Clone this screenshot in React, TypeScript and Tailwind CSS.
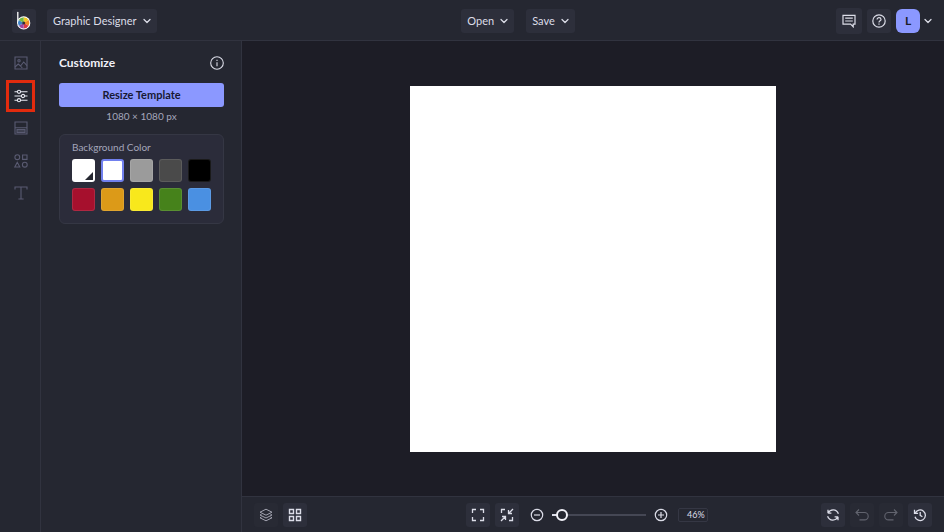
import React, { useState } from 'react';
import { ChevronDown } from 'lucide-react';

type IconProps = { size?: number; width?: number; className?: string; children: React.ReactNode };

const Icon: React.FC<IconProps> = ({ size = 14, width = 1.2, className = '', children }) => (
  <svg
    width={size}
    height={size}
    viewBox="0 0 14 14"
    fill="none"
    stroke="currentColor"
    strokeWidth={width}
    className={`shrink-0 ${className}`}
    aria-hidden="true"
  >
    {children}
  </svg>
);

const Logo = () => (
  <svg width="24" height="24" viewBox="0 0 24 24" aria-hidden="true">
    <path d="M5.8 3.4v10.6" stroke="#fff" strokeWidth="1.3" fill="none" strokeLinecap="round" />
    <circle cx="11.7" cy="13.9" r="6.6" fill="#fff" />
    <g transform="translate(11.7 13.9)">
      <path d="M0 0L0 -5.7A5.7 5.7 0 0 1 4.9 -2.85Z" fill="#f3c623" />
      <path d="M0 0L4.9 -2.85A5.7 5.7 0 0 1 4.9 2.85Z" fill="#f08a24" />
      <path d="M0 0L4.9 2.85A5.7 5.7 0 0 1 0 5.7Z" fill="#dd3a45" />
      <path d="M0 0L0 5.7A5.7 5.7 0 0 1 -4.9 2.85Z" fill="#9b49a4" />
      <path d="M0 0L-4.9 2.85A5.7 5.7 0 0 1 -4.9 -2.85Z" fill="#3f83c8" />
      <path d="M0 0L-4.9 -2.85A5.7 5.7 0 0 1 0 -5.7Z" fill="#72b845" />
      <circle r="1.5" fill="#30303a" />
    </g>
  </svg>
);

const tools = [
  {
    id: 'image',
    label: 'Image Manager',
    icon: (
      <>
        <path d="M1 1h12v12H1z" />
        <circle cx="5" cy="4.8" r="1.2" />
        <path d="M1 11l3.2-3 2.3 2 3.2-4 3.3 3.6M6.5 10l1.8 2" />
      </>
    )
  },
  {
    id: 'customize',
    label: 'Customize',
    icon: (
      <>
        <path d="M.5 2.8h2.8M6.7 2.8h6.8M.5 7h6.8M10.7 7h2.8M.5 11.2h2.8M6.7 11.2h6.8" />
        <circle cx="5" cy="2.8" r="1.6" />
        <circle cx="9" cy="7" r="1.6" />
        <circle cx="5" cy="11.2" r="1.6" />
      </>
    )
  },
  {
    id: 'templates',
    label: 'Templates',
    icon: (
      <>
        <path d="M1 1h12v12H1zM1 6.8h12" />
        <path d="M3 8.5h8v3H3z" fill="currentColor" fillOpacity=".5" />
      </>
    )
  },
  {
    id: 'graphics',
    label: 'Graphics',
    icon: (
      <>
        <circle cx="3.3" cy="3.2" r="2.4" />
        <path d="M8.6 1h4.4v4.4H8.6zM3.3 8.3L.8 13h5z" />
        <circle cx="10.8" cy="10.7" r="2.4" />
      </>
    )
  },
  {
    id: 'text',
    label: 'Text',
    icon: <path d="M1 3.6V1h12v2.6M7 1v12M4.4 13h5.2" />
  }
];

const colors = [
  { name: 'Transparent white', value: '#ffffff' },
  { name: 'White', value: '#ffffff' },
  { name: 'Gray', value: '#9b9b9b' },
  { name: 'Dark gray', value: '#4a4a4a' },
  { name: 'Black', value: '#000000' },
  { name: 'Red', value: '#a6102d' },
  { name: 'Orange', value: '#dc9a18' },
  { name: 'Yellow', value: '#f8e81c' },
  { name: 'Green', value: '#46821b' },
  { name: 'Blue', value: '#4a90e2' }
];

const MenuButton: React.FC<{ label: string }> = ({ label }) => (
  <button type="button" className="flex h-6 items-center gap-1 whitespace-nowrap rounded-[3px] bg-[#2d2f3b] pr-1 pl-1.5 text-[#dcdde8]">
    {label}
    <ChevronDown size={12} strokeWidth={2.5} />
  </button>
);

const ToolButton: React.FC<{ label: string; dim?: boolean; children: React.ReactNode }> = ({ label, dim, children }) => (
  <button
    type="button"
    aria-label={label}
    className={`flex size-6 shrink-0 items-center justify-center rounded-[3px] ${
      dim ? 'bg-[#282a34] text-[#62646f]' : 'bg-[#2d2f3b] text-[#dcdde8]'
    }`}
  >
    {children}
  </button>
);

const Header = () => (
  <header className="flex h-[41px] shrink-0 items-center border-b border-[#31333f] bg-[#252731] pt-0.5 pr-2.5 pl-3">
    <div className="flex gap-[11px]">
      <a href="#home" aria-label="Home" className="block size-6 rounded-[3px] bg-[#2d2f3b]">
        <Logo />
      </a>
      <MenuButton label="Graphic Designer" />
    </div>
    <div className="flex-[7]" />
    <div className="flex gap-3">
      <MenuButton label="Open" />
      <MenuButton label="Save" />
    </div>
    <div className="flex-[6]" />
    <div className="flex items-center gap-[5px] text-[#dcdde8]">
      <button type="button" aria-label="Messages" className="flex size-[26px] items-center justify-center rounded-[3px] bg-[#2d2f3b]">
        <Icon>
          <path d="M1 1.3h12v8.8h-1.8v2.7L8.6 10.1H1zM3.2 4.2h7.6M3.2 7h7.6" />
        </Icon>
      </button>
      <ToolButton label="Help">
        <Icon>
          <circle cx="7" cy="7" r="6.2" />
          <path d="M5.1 5.6c0-2.7 3.9-2.5 3.9-.2C9 6.8 7 6.7 7 8.4M7 9.5v1.2" />
        </Icon>
      </ToolButton>
      <button type="button" aria-label="Account" className="flex items-center gap-0.5">
        <span className="flex size-6 items-center justify-center rounded-md bg-[#8b98ff] text-xs font-bold text-[#1c1d28]">L</span>
        <ChevronDown size={12} strokeWidth={2.5} />
      </button>
    </div>
  </header>
);

const ToolRail = () => (
  <nav className="w-[41px] shrink-0 border-r border-[#31333f] pt-1.5 pl-px">
    <div className="flex h-[162px] flex-col items-center justify-between">
      {tools.map(tool => (
        <button
          key={tool.id}
          type="button"
          aria-label={tool.label}
          className={`flex h-8 w-[29px] items-center justify-center ${
            tool.id === 'customize' ? 'border-3 border-[#e22b0e] text-[#e8e9f2]' : 'text-[#5a5b72]'
          }`}
        >
          <Icon width={1.1}>{tool.icon}</Icon>
        </button>
      ))}
    </div>
  </nav>
);

const CustomizePanel = () => {
  const [selected, setSelected] = useState(1);

  return (
    <aside className="w-[201px] shrink-0 border-r border-[#31333f] pt-3.5 pr-[17px] pl-[18px]">
      <div className="flex h-4 items-center justify-between">
        <h1 className="text-xs font-bold text-[#f1f1f8]">Customize</h1>
        <button type="button" aria-label="About Customize" className="text-[#dcdde8]">
          <Icon width={1.1}>
            <circle cx="7" cy="7" r="6.3" />
            <path d="M7 6.2v4M7 3.7v1.2" />
          </Icon>
        </button>
      </div>
      <button type="button" className="mt-3 block h-6 w-full rounded-[3px] bg-[#8b98ff] font-bold text-[#171933]">
        Resize Template
      </button>
      <p className="mt-px text-center text-[10px] leading-4 text-[#a4a6bb]">1080 × 1080 px</p>
      <section className="mt-2.5 rounded-md border border-[#353744] bg-[#2b2c3a] px-3 pt-1 pb-3">
        <h2 className="text-[10px] leading-4 text-[#a4a6bb]">Background Color</h2>
        <div className="mt-1 grid grid-cols-5 gap-1.5">
          {colors.map((color, index) => (
            <button
              key={color.name}
              type="button"
              aria-label={color.name}
              aria-pressed={selected === index}
              onClick={() => setSelected(index)}
              className={`relative h-[23px] rounded-[3px] border ${
                selected === index ? 'border-2 border-[#7180ee]' : 'border-white/10'
              }`}
              style={{ backgroundColor: color.value }}
            >
              {index === 0 && (
                <svg width="8" height="8" viewBox="0 0 8 8" className="absolute right-px bottom-px" aria-hidden="true">
                  <path d="M8 0v8H0z" fill="#252731" />
                </svg>
              )}
            </button>
          ))}
        </div>
      </section>
    </aside>
  );
};

const BottomBar = () => {
  const [zoom, setZoom] = useState(46);

  return (
    <footer className="flex h-9 shrink-0 items-center border-t border-[#31333f] bg-[#252731] px-3 text-[#dcdde8]">
      <div className="flex gap-[5px]">
        <ToolButton label="Layers" dim>
          <Icon width={1} className="text-[#a0a1ae]">
            <path d="M7 1.2l6 3-6 3-6-3zM2.5 6.3L1 7l6 3 6-3-1.5-.7M2.5 9L1 9.8l6 3 6-3-1.5-.8" />
          </Icon>
        </ToolButton>
        <ToolButton label="Templates grid">
          <Icon width={1.4}>
            <path d="M1.5 1.5h4v4h-4zM8.5 1.5h4v4h-4zM1.5 8.5h4v4h-4zM8.5 8.5h4v4h-4z" />
          </Icon>
        </ToolButton>
      </div>
      <div className="flex-[7]" />
      <div className="flex items-center">
        <div className="flex gap-[5px]">
          <ToolButton label="Fit to screen">
            <Icon width={1.3}>
              <path d="M1.5 5V1.5H5M9 1.5h3.5V5M12.5 9v3.5H9M5 12.5H1.5V9" />
            </Icon>
          </ToolButton>
          <ToolButton label="Actual size">
            <Icon width={1.3}>
              <path d="M1.5 5V1.5H5M12.5 9v3.5H9M13 1L8.8 5.2M8.5 2v3.5H12M1 13l4.2-4.2M2 8.5h3.5V12" />
            </Icon>
          </ToolButton>
        </div>
        <button type="button" aria-label="Zoom out" className="ml-[11px]" onClick={() => setZoom(Math.max(zoom - 5, 40))}>
          <Icon>
            <circle cx="7" cy="7" r="5.7" />
            <path d="M4 7h6" />
          </Icon>
        </button>
        <input
          type="range"
          aria-label="Zoom"
          min={40}
          max={145}
          value={zoom}
          onChange={e => setZoom(Number(e.target.value))}
          className="mx-2 h-3 w-[94px] appearance-none bg-[linear-gradient(to_right,#dcdde8_6px,#454754_6px)] bg-[length:100%_2px] bg-center bg-no-repeat [&::-webkit-slider-thumb]:size-3 [&::-webkit-slider-thumb]:appearance-none [&::-webkit-slider-thumb]:rounded-full [&::-webkit-slider-thumb]:border-2 [&::-webkit-slider-thumb]:border-[#f1f1f8] [&::-webkit-slider-thumb]:bg-[#252731]"
        />
        <button type="button" aria-label="Zoom in" onClick={() => setZoom(Math.min(zoom + 5, 145))}>
          <Icon>
            <circle cx="7" cy="7" r="5.7" />
            <path d="M4 7h6M7 4v6" />
          </Icon>
        </button>
        <input
          type="text"
          aria-label="Zoom level"
          readOnly
          value={`${zoom}%`}
          className="ml-2.5 h-3.5 w-[30px] rounded-xs border border-[#353744] px-0.5 text-right text-[9px]"
        />
      </div>
      <div className="flex-[5]" />
      <div className="flex gap-[5px]">
        <ToolButton label="Reset">
          <Icon width={1.3}>
            <path d="M2 5.2V1.8M2 5.2h3.4M2 5.2C4.2.8 10.6.8 12.4 5.8M12 8.8v3.4M12 8.8H8.6M12 8.8c-2.2 4.4-8.6 4.4-10.4-.6" />
          </Icon>
        </ToolButton>
        <ToolButton label="Undo" dim>
          <Icon width={1.1}>
            <path d="M4 1.5L1 4.5l3 3M1 4.5h8.5a3.7 3.7 0 0 1 0 7.4H4.5" />
          </Icon>
        </ToolButton>
        <ToolButton label="Redo" dim>
          <Icon width={1.1}>
            <path d="M10 1.5l3 3-3 3M13 4.5H4.5a3.7 3.7 0 0 0 0 7.4h5" />
          </Icon>
        </ToolButton>
        <ToolButton label="History">
          <Icon width={1.3}>
            <path d="M2.2 5.2A5.3 5.3 0 1 1 2 8.7M1.5 1.8v3.6h3.6M7.2 4v3.4l2.2 1.3" />
          </Icon>
        </ToolButton>
      </div>
    </footer>
  );
};

const App: React.FC = () => {
  return (
    <div className="flex min-h-screen flex-col bg-[#252731] font-['Lato',sans-serif] text-[11px] text-[#dcdde8]">
      <Header />
      <div className="flex flex-1">
        <ToolRail />
        <CustomizePanel />
        <div className="flex min-w-0 flex-1 flex-col">
          <main className="flex flex-1 items-center justify-center bg-[#1d1d26]">
            <div className="aspect-square w-[366px] bg-white" />
          </main>
          <BottomBar />
        </div>
      </div>
    </div>
  );
};

export default App;
